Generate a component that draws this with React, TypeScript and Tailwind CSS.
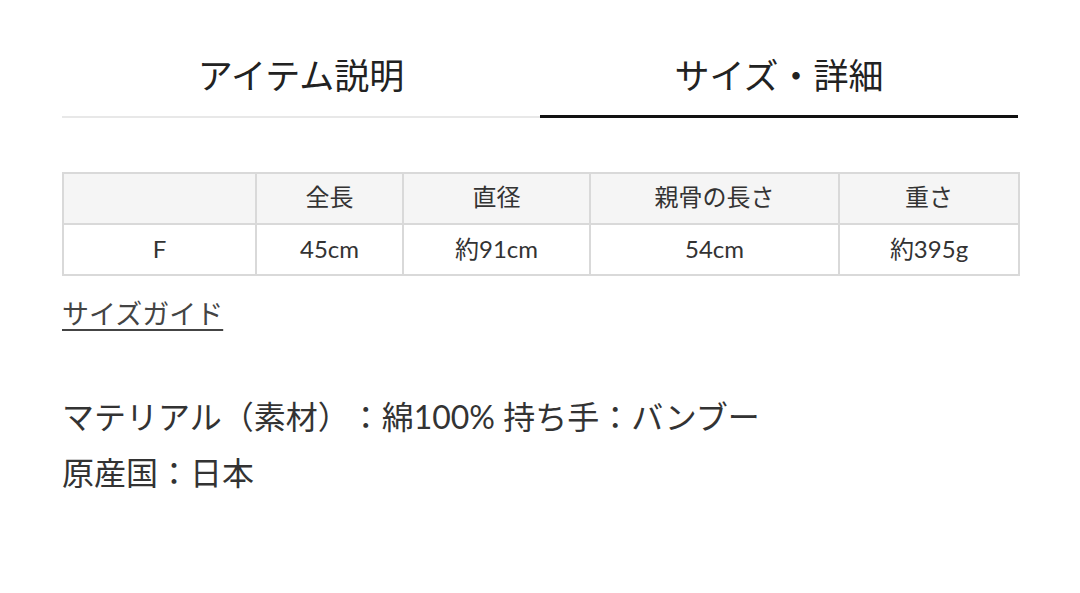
const headers = ["", "全長", "直径", "親骨の長さ", "重さ"];
const row = ["F", "45cm", "約91cm", "54cm", "約395g"];
const colWidths = ["w-[193px]", "w-[147px]", "w-[187px]", "w-[249px]", "w-[180px]"];

export default function App() {
  return (
    <div className="min-h-screen bg-white px-[62px] text-[#222] [font-family:Lato,'Noto_Sans_CJK_JP',sans-serif] [text-spacing-trim:space-all]">
      {/* タブ */}
      <div className="flex pt-[52px]">
        <button className="flex-1 border-b-2 border-[#e8e8e8] pb-[18px] text-[35px] leading-[46px] text-[#222]">
          アイテム説明
        </button>
        <button className="flex-1 border-b-[3px] border-[#111] pb-[17px] text-[35px] leading-[46px] text-[#222]">
          サイズ・詳細
        </button>
      </div>

      {/* サイズ表 */}
      <table className="mt-[54px] w-[955px] table-fixed border-collapse text-[24px] text-[#333]">
        <colgroup>
          {colWidths.map((w, i) => (
            <col key={i} className={w} />
          ))}
        </colgroup>
        <thead>
          <tr className="bg-[#f5f5f5]">
            {headers.map((h, i) => (
              <th key={i} className="h-[51px] border-2 border-[#d9d9d9] p-0 pb-[3px] text-center font-normal">
                {h}
              </th>
            ))}
          </tr>
        </thead>
        <tbody>
          <tr>
            {row.map((c, i) => (
              <td key={i} className="h-[51px] border-2 border-[#d9d9d9] p-0 pb-[2px] text-center">
                {c}
              </td>
            ))}
          </tr>
        </tbody>
      </table>

      <div className="mt-[20px]">
        <a className="text-[27px] leading-[36px] text-[#444] underline decoration-2 underline-offset-[5px]">
          サイズガイド
        </a>
      </div>

      {/* 素材 */}
      <div className="mt-[57px] text-[32px] leading-[56px] text-[#333]">
        <p>マテリアル（素材）：綿100% 持ち手：バンブー</p>
        <p>原産国：日本</p>
      </div>
    </div>
  );
}
